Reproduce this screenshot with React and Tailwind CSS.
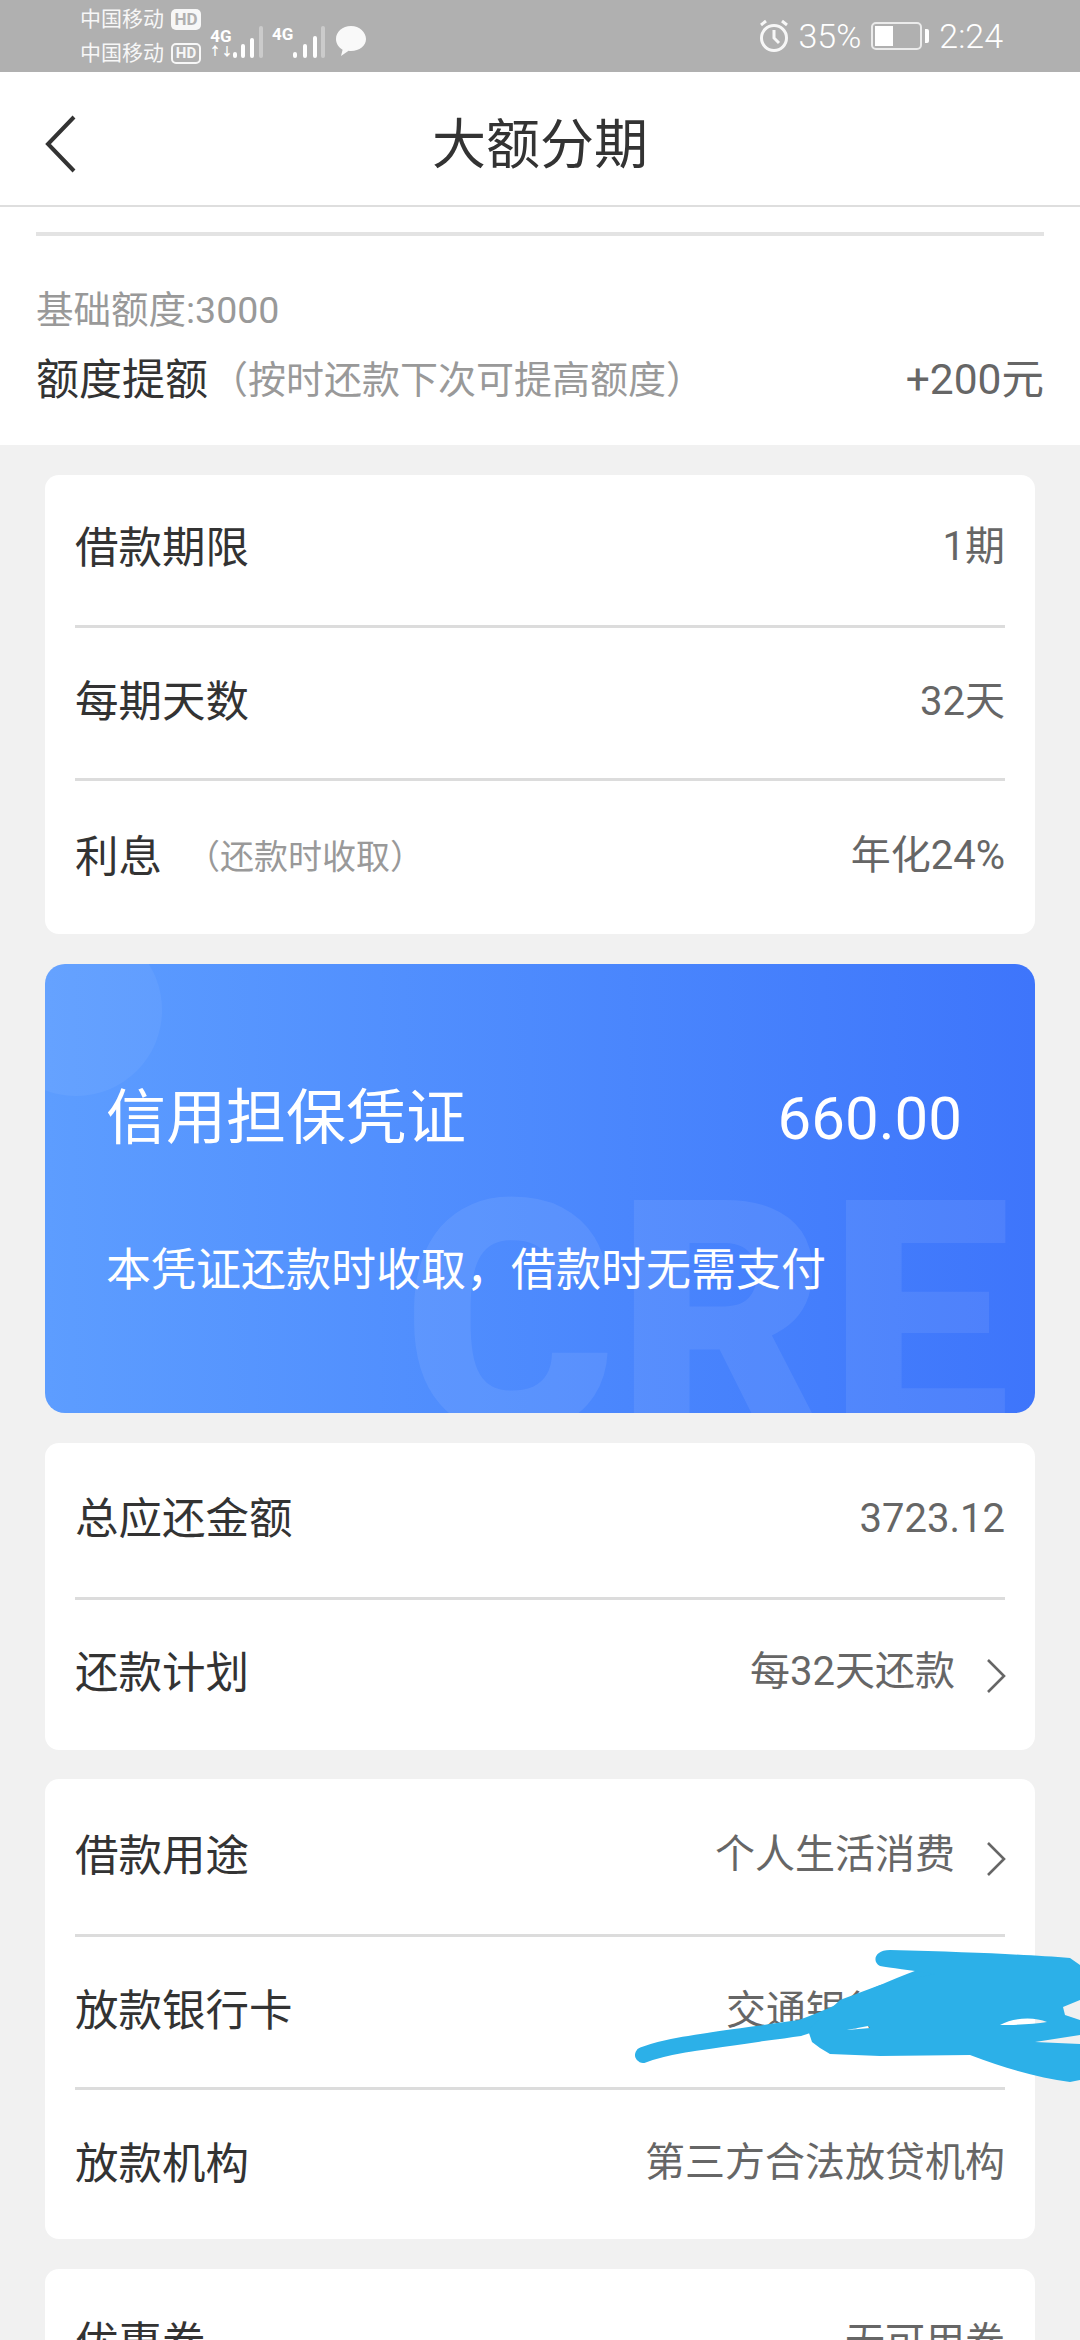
const cjk = "font-['Roboto','Noto_Sans_CJK_SC',sans-serif]"

const Chevron = () => (
  <svg width="22" height="36" viewBox="0 0 22 36" fill="none" className="ml-[30px] mr-[-2px] mt-[4px]">
    <path d="M3 2l16 16L3 34" stroke="#666" strokeWidth="2.6" />
  </svg>
)

const Row = ({ label, note, value, chevron, className = 'h-[150px]' }) => (
  <div className={`flex items-center justify-between ${className}`}>
    <div className="flex items-center">
      <span className="text-[43.5px] text-[#333]">{label}</span>
      {note && <span className="ml-[24px] text-[34px] text-[#999]">{note}</span>}
    </div>
    <div className="flex items-center">
      <span className="mb-[3px] text-[40px] text-[#666]">{value}</span>
      {chevron && <Chevron />}
    </div>
  </div>
)

const Sep = () => <div className="h-[3px] bg-[#dcdcdc]" />

const Card = ({ children, className = '' }) => (
  <div className={`mx-[45px] rounded-[14px] bg-white px-[30px] ${className}`}>{children}</div>
)

const Signal = ({ w, bars }) => (
  <svg width={w} height="32" viewBox={`0 0 ${w} 32`}>
    {bars.map((b, i) => (
      <rect key={i} x={b[0]} y={32 - b[1]} width="4" height={b[1]} rx="2" fill="#fff" opacity={b[2] || 1} />
    ))}
  </svg>
)

const StatusBar = () => (
  <div className="flex h-[72px] items-center justify-between bg-[#b0b0b0] pl-[80px] pr-[77px] text-white">
    <div className="flex items-center">
      <div className="flex flex-col gap-[12px] opacity-90">
        <div className="flex h-[22px] items-center">
          <span className="w-[88px] text-[21px] leading-[22px]">中国移动</span>
          <span className="ml-[3px] flex h-[21px] w-[30px] items-center justify-center rounded-[5px] bg-white text-[17px] font-bold leading-none text-[#b0b0b0]">HD</span>
        </div>
        <div className="flex h-[22px] items-center">
          <span className="w-[88px] text-[21px] leading-[22px]">中国移动</span>
          <span className="ml-[3px] flex h-[21px] w-[30px] items-center justify-center rounded-[5px] border-2 border-white text-[15px] font-bold leading-none">HD</span>
        </div>
      </div>
      <div className="ml-[10px] mt-[12px] flex items-end">
        <div className="flex w-[20px] flex-col items-center">
          <span className="text-[17px] font-bold leading-[16px]">4G</span>
          <span className="mt-[3px] text-[12px] font-bold leading-[11px]">↑↓</span>
        </div>
        <div className="ml-[2px]">
          <Signal w={31} bars={[[0, 6], [8, 14], [17, 20], [26, 32, 0.35]]} />
        </div>
      </div>
      <div className="ml-[8px] mt-[12px] flex items-end">
        <span className="mb-[16px] w-[21px] text-[17px] font-bold leading-[16px]">4G</span>
        <Signal w={32} bars={[[0, 6], [10, 14], [20, 22], [28, 32, 0.35]]} />
      </div>
      <svg width="32" height="32" viewBox="0 0 32 32" className="ml-[10px] mt-[10px]">
        <path d="M16 1C7.5 1 1 6.7 1 14c0 4.600 2.600 8.500 6.600 10.800L6 31l7.600-5.200c.8.1 1.600.2 2.400.2 8.500 0 15-5.300 15-12S24.500 1 16 1z" fill="#fff" opacity=".92" />
      </svg>
    </div>
    <div className="flex items-center">
      <svg width="32" height="34" viewBox="0 0 32 34" fill="none" stroke="#fff" strokeWidth="3" opacity=".9">
        <circle cx="16" cy="19" r="12.500" />
        <path d="M16 11v8l5 5M3 6l5-4M29 6l-5-4" />
      </svg>
      <span className="ml-[8px] text-[34px] font-light leading-none">35%</span>
      <div className="ml-[10px] flex h-[28px] w-[51px] items-center rounded-[5px] border-2 border-white/75 px-[2px]">
        <div className="h-[20px] w-[18px] bg-white" />
      </div>
      <div className="ml-[3px] h-[14px] w-[4px] rounded-r-[2px] bg-white" />
      <span className="ml-[10px] text-[34px] font-light leading-none">2:24</span>
    </div>
  </div>
)

const Scribble = () => (
  <svg width="1080" height="2340" viewBox="0 0 1080 2340" className="pointer-events-none absolute left-0 top-0">
    <path d="M643 2055C670 2045 700 2042 800 2028C840 2015 880 1990 933 1973" fill="none" stroke="#2cb0e8" strokeWidth="16" strokeLinecap="round" />
    <path fill="#2cb0e8" fillRule="evenodd" d="M890 1950C975 1952 1030 1955 1070 1958L1080 1965V2000L1063 2007L1065 2015L1080 2020V2035L1035 2042L1080 2044V2080L1070 2082C1040 2078 1010 2070 970 2055L880 2056L830 2054L820 2048L812 2042L808 2030L840 2000L880 1985L935 1974C910 1970 890 1968 880 1966C872 1962 874 1950 890 1950ZM1000 2025C1020 2025 1035 2024 1047 2022C1035 2017 1015 2017 1000 2025ZM847 2030L870 2028L868 2026Z" />
  </svg>
)

export default function App() {
  return (
    <div className={`relative h-[2340px] overflow-hidden bg-[#f1f1f1] ${cjk}`}>
      <StatusBar />

      <div className="relative flex h-[135px] items-center justify-center border-b-2 border-[#dedede] bg-white">
        <svg width="32" height="58" viewBox="0 0 32 58" fill="none" className="absolute left-[45px] top-[43px]">
          <path d="M29 2L3 29l26 27" stroke="#333" strokeWidth="4" />
        </svg>
        <span className="mt-[14px] text-[54px] text-[#333]">大额分期</span>
      </div>

      <div className="h-[238px] bg-white px-[36px] pt-[25px]">
        <div className="h-[4px] bg-[#e3e3e3]" />
        <div className="mt-[52px] text-[37.500px] leading-[44px] text-[#999]">基础额度:3000</div>
        <div className="mt-[23px] flex items-center justify-between">
          <div className="flex items-center">
            <span className="text-[43px] leading-[50px] text-[#333]">额度提额</span>
            <span className="ml-[2px] text-[38px] leading-[50px] text-[#999]">{'\uFF08按时还款下次可提高额度\uFF09'}</span>
          </div>
          <span className="text-[42.500px] leading-[50px] text-[#666]">+200元</span>
        </div>
      </div>

      <Card className="mt-[30px]">
        <Row label="借款期限" value="1期" className="h-[150px] pb-[3px]" />
        <Sep />
        <Row label="每期天数" value="32天" />
        <Sep />
        <Row label="利息" note={'\uFF08还款时收取\uFF09'} value="年化24%" className="h-[153px]" />
      </Card>

      <div className="relative mx-[45px] mt-[30px] h-[449px] overflow-hidden rounded-[20px] bg-gradient-to-r from-[#5d9dff] to-[#3e75fb] px-[61px] text-white">
        <div className="absolute left-[-55px] top-[-40px] h-[172px] w-[172px] rounded-full bg-white/[0.05]" />
        <div className="absolute left-[358px] top-[126px] font-['Roboto',sans-serif] text-[325px] font-black leading-[460px] text-white/[0.08]">CRE</div>
        <div className="relative flex h-[208px] items-center justify-between pr-[12px] pt-[2px]">
          <span className="mt-[100px] text-[60px]">信用担保凭证</span>
          <span className="mt-[100px] text-[60px]">660.00</span>
        </div>
        <div className="relative mt-[65px] text-[45px]">{'本凭证还款时收取\uFF0C借款时无需支付'}</div>
      </div>

      <Card className="mt-[30px]">
        <Row label="总应还金额" value="3723.12" className="h-[154px]" />
        <Sep />
        <Row label="还款计划" value="每32天还款" chevron className="h-[150px] pb-[3px]" />
      </Card>

      <Card className="mt-[29px]">
        <Row label="借款用途" value="个人生活消费" chevron className="h-[155px]" />
        <Sep />
        <Row label="放款银行卡" value="交通银行" className="h-[150px] [&>div:last-child]:mr-[119px]" />
        <Sep />
        <Row label="放款机构" value="第三方合法放贷机构" className="h-[149px]" />
      </Card>

      <Card className="mt-[30px]">
        <Row label="优惠券" value="无可用券" />
      </Card>

      <Scribble />
    </div>
  )
}
